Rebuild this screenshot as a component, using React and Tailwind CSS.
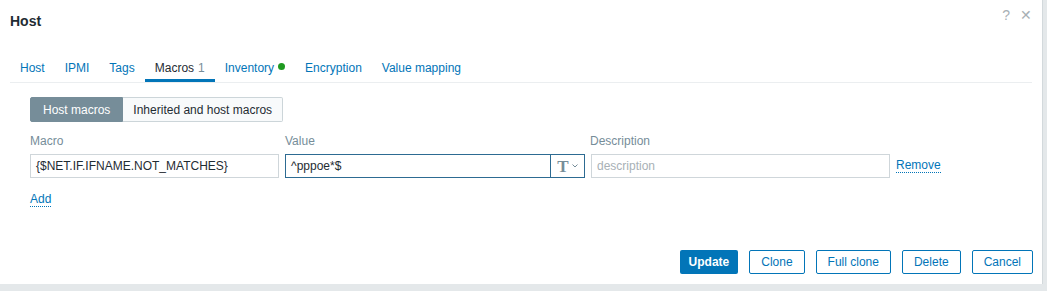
import React from "react";

export default function App() {
  const tabs = [
    { t: "Host" },
    { t: "IPMI" },
    { t: "Tags" },
    { t: "Macros", active: true },
    { t: "Inventory", dot: true },
    { t: "Encryption" },
    { t: "Value mapping" },
  ];
  return (
    <div className="w-[1047px] h-[291px] bg-[#e4e8ea] overflow-hidden" style={{ fontFamily: '"Liberation Sans", Arial, sans-serif' }}>
      <div className="w-[1043px] h-[284px] bg-white border-r border-[#d3d9dc] flex flex-col relative">
        <div className="h-[42px] flex items-center pl-[10px]">
          <span className="text-[14px] font-bold text-[#1f2c33]">Host</span>
        </div>
        <div className="absolute right-[10px] top-[5px] flex gap-[10px] text-[#a8b0b5] text-[14px]">
          <span>?</span>
          <span>✕</span>
        </div>
        <div className="mx-[10px] border-b border-[#ebeef0] flex h-[41px] items-end">
          {tabs.map((tb) => (
            <div
              key={tb.t}
              className={
                "px-[10px] h-[31px] pt-[8px] text-[12px] flex items-start gap-[4px] " +
                (tb.active ? "text-[#1f2c33] border-b-[3px] border-[#0275b8]" : "text-[#0275b8]")
              }
            >
              <span>{tb.t}</span>
              {tb.active && <span className="text-[#768d99]">1</span>}
              {tb.dot && <span className="w-[7px] h-[7px] rounded-full bg-[#1f9a20] mt-[4px]"></span>}
            </div>
          ))}
        </div>
        <div className="pl-[30px] pt-[14px]">
          <div className="flex h-[25px] text-[12px]">
            <div className="bg-[#768d99] text-white px-[12px] flex items-center rounded-l-[2px] border border-[#768d99]">Host macros</div>
            <div className="bg-[#f8fafb] text-[#1f2c33] px-[10px] flex items-center border border-l-0 border-[#ccd5d9] rounded-r-[2px]">Inherited and host macros</div>
          </div>
          <div className="flex mt-[10px] text-[12px] text-[#768d99] h-[18px]">
            <span className="w-[255px]">Macro</span>
            <span className="w-[305px]">Value</span>
            <span>Description</span>
          </div>
          <div className="flex mt-[4px] h-[24px] text-[12px] gap-[6px] items-center">
            <div className="w-[249px] h-[24px] border border-[#cfd6da] flex items-center px-[5px] text-[#1f2c33]">{"{$NET.IF.IFNAME.NOT_MATCHES}"}</div>
            <div className="w-[300px] h-[24px] border border-[#2d6b92] flex">
              <div className="flex-1 flex items-center px-[5px] text-[#1f2c33]">^pppoe*$</div>
              <div className="w-[34px] border-l border-[#2d6b92] flex items-center justify-center gap-[3px] text-[#768d99]">
                <span className="text-[17px] font-bold leading-none" style={{ fontFamily: '"Liberation Serif", serif' }}>T</span>
                <svg width="6" height="4" viewBox="0 0 6 4"><path d="M0.5 0.5 L3 3 L5.5 0.5" fill="none" stroke="#768d99" strokeWidth="1" /></svg>
              </div>
            </div>
            <div className="w-[299px] h-[24px] border border-[#cfd6da] flex items-center px-[5px] text-[#a8b1b6]">description</div>
            <span className="text-[#0275b8] border-b border-dotted border-[#0275b8] leading-[13px]">Remove</span>
          </div>
          <div className="mt-[12px] text-[12px]">
            <span className="text-[#0275b8] border-b border-dotted border-[#0275b8] leading-[13px] inline-block">Add</span>
          </div>
        </div>
        <div className="mt-auto mb-[10px] flex justify-end gap-[11px] pr-[9px] text-[12px]">
          <div className="h-[24px] px-[9px] bg-[#0275b8] text-white font-bold flex items-center rounded-[2px]">Update</div>
          <div className="h-[24px] px-[11px] border border-[#0275b8] text-[#0275b8] flex items-center rounded-[2px]">Clone</div>
          <div className="h-[24px] px-[11px] border border-[#0275b8] text-[#0275b8] flex items-center rounded-[2px]">Full clone</div>
          <div className="h-[24px] px-[11px] border border-[#0275b8] text-[#0275b8] flex items-center rounded-[2px]">Delete</div>
          <div className="h-[24px] px-[11px] border border-[#0275b8] text-[#0275b8] flex items-center rounded-[2px]">Cancel</div>
        </div>
      </div>
    </div>
  );
}
